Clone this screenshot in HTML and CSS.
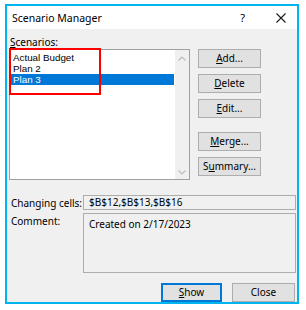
FILE: index.html
```html
<!DOCTYPE html>
<html lang="en">
<head>
    <meta charset="UTF-8">
    <title>Scenario Manager</title>
    <link rel="stylesheet" href="styles.css">
</head>
<body>
    <div class="dialog">
        <div class="titlebar">
            <span class="title">Scenario Manager</span>
            <span class="help">?</span>
            <span class="close-x">
                <svg width="10" height="10" viewBox="0 0 10 10">
                    <path d="M0.5 0.5 L9.5 9.5 M9.5 0.5 L0.5 9.5" stroke="#1a1a1a" stroke-width="1.1" fill="none"/>
                </svg>
            </span>
        </div>
        <div class="body">
            <div class="label-top"><u>S</u>cenarios:</div>
            <div class="main-row">
                <div class="listbox">
                    <div class="items">
                        <div class="item">Actual Budget</div>
                        <div class="item">Plan 2</div>
                        <div class="item selected">Plan 3</div>
                    </div>
                    <div class="scrollbar">
                        <svg width="8" height="5" viewBox="0 0 8 5">
                            <path d="M0.5 4.5 L4 1 L7.5 4.5" stroke="#bdbdbd" stroke-width="1.2" fill="none"/>
                        </svg>
                        <svg width="8" height="5" viewBox="0 0 8 5">
                            <path d="M0.5 0.5 L4 4 L7.5 0.5" stroke="#bdbdbd" stroke-width="1.2" fill="none"/>
                        </svg>
                    </div>
                    <div class="highlight-box"></div>
                </div>
                <div class="side-buttons">
                    <button class="btn"><u>A</u>dd...</button>
                    <button class="btn gap-s"><u>D</u>elete</button>
                    <button class="btn gap-s"><u>E</u>dit...</button>
                    <button class="btn gap-l"><u>M</u>erge...</button>
                    <button class="btn gap-s">S<u>u</u>mmary...</button>
                </div>
            </div>
            <div class="field-row">
                <div class="field-label">Changing cells:</div>
                <div class="field">$B$12,$B$13,$B$16</div>
            </div>
            <div class="field-row comment-row">
                <div class="field-label">Comment:</div>
                <div class="field comment">Created on 2/17/2023</div>
            </div>
            <div class="bottom-buttons">
                <button class="btn show"><u>S</u>how</button>
                <button class="btn close">Close</button>
            </div>
        </div>
    </div>
</body>
</html>
```

FILE: styles.css
```css
:root {
    --frame: #00b4f0;
    --face: #f0f0f0;
    --btn-face: #e1e1e1;
    --btn-border: #adadad;
    --select: #0078d7;
}

body {
    margin: 0;
    background: #ffffff;
    font-family: "Noto Sans", "Open Sans", sans-serif;
    font-size: 10px;
    color: #000;
}

.dialog {
    margin: 4px 0 0 5px;
    width: 294px;
    height: 300px;
    box-sizing: border-box;
    border: 2px solid var(--frame);
    display: flex;
    flex-direction: column;
}

.titlebar {
    height: 23px;
    background: #fff;
    display: flex;
    align-items: center;
    padding-left: 5px;
    flex-shrink: 0;
}

.title {
    font-size: 10.5px;
    flex: 1;
}

.help {
    font-size: 11px;
    margin-right: 31px;
}

.close-x {
    display: flex;
    margin-right: 11px;
}

.body {
    flex: 1;
    background: var(--face);
    padding: 7px 1px 0 2px;
}

.label-top {
    line-height: 13px;
    padding-left: 1px;
}

.main-row {
    display: flex;
    gap: 8px;
}

.listbox {
    position: relative;
    width: 181px;
    height: 131px;
    box-sizing: border-box;
    border: 1px solid #a0a0a0;
    background: #fff;
    display: flex;
}

.items {
    flex: 1;
    padding: 2px 1px 0 1px;
    font-family: "Liberation Sans", Arial, sans-serif;
    font-size: 9.8px;
}

.item {
    height: 11px;
    line-height: 11px;
    padding-left: 2px;
}

.item.selected {
    background: var(--select);
    color: #fff;
}

.scrollbar {
    width: 14px;
    background: var(--face);
    display: flex;
    flex-direction: column;
    justify-content: space-between;
    align-items: center;
    padding: 6px 0 4px;
}

.highlight-box {
    position: absolute;
    left: -1px;
    top: -2px;
    width: 92px;
    height: 47px;
    box-sizing: border-box;
    border: 2px solid #f00;
}

.side-buttons {
    display: flex;
    flex-direction: column;
}

.btn {
    font-family: inherit;
    font-size: 10px;
    color: #000;
    background: var(--btn-face);
    border: 1px solid var(--btn-border);
    width: 63px;
    height: 19px;
    padding: 0;
    line-height: 17px;
}

.gap-s {
    margin-top: 6px;
}

.gap-l {
    margin-top: 14px;
}

.field-row {
    display: flex;
    align-items: center;
    margin-top: 15px;
}

.comment-row {
    align-items: flex-start;
    margin-top: 3px;
}

.field-label {
    width: 74px;
    padding-left: 2px;
    box-sizing: border-box;
}

.comment-row .field-label {
    padding-top: 1px;
}

.field {
    width: 213px;
    height: 15px;
    box-sizing: border-box;
    border: 1px solid var(--btn-border);
    background: var(--face);
    padding-left: 5px;
    line-height: 13px;
}

.field.comment {
    height: 60px;
    padding-top: 4px;
}

.bottom-buttons {
    display: flex;
    justify-content: flex-end;
    gap: 10px;
    margin-top: 10px;
    padding-right: 1px;
}

.btn.show {
    width: 61px;
    border-color: var(--select);
    box-shadow: inset 0 0 0 1px var(--select);
}
```
